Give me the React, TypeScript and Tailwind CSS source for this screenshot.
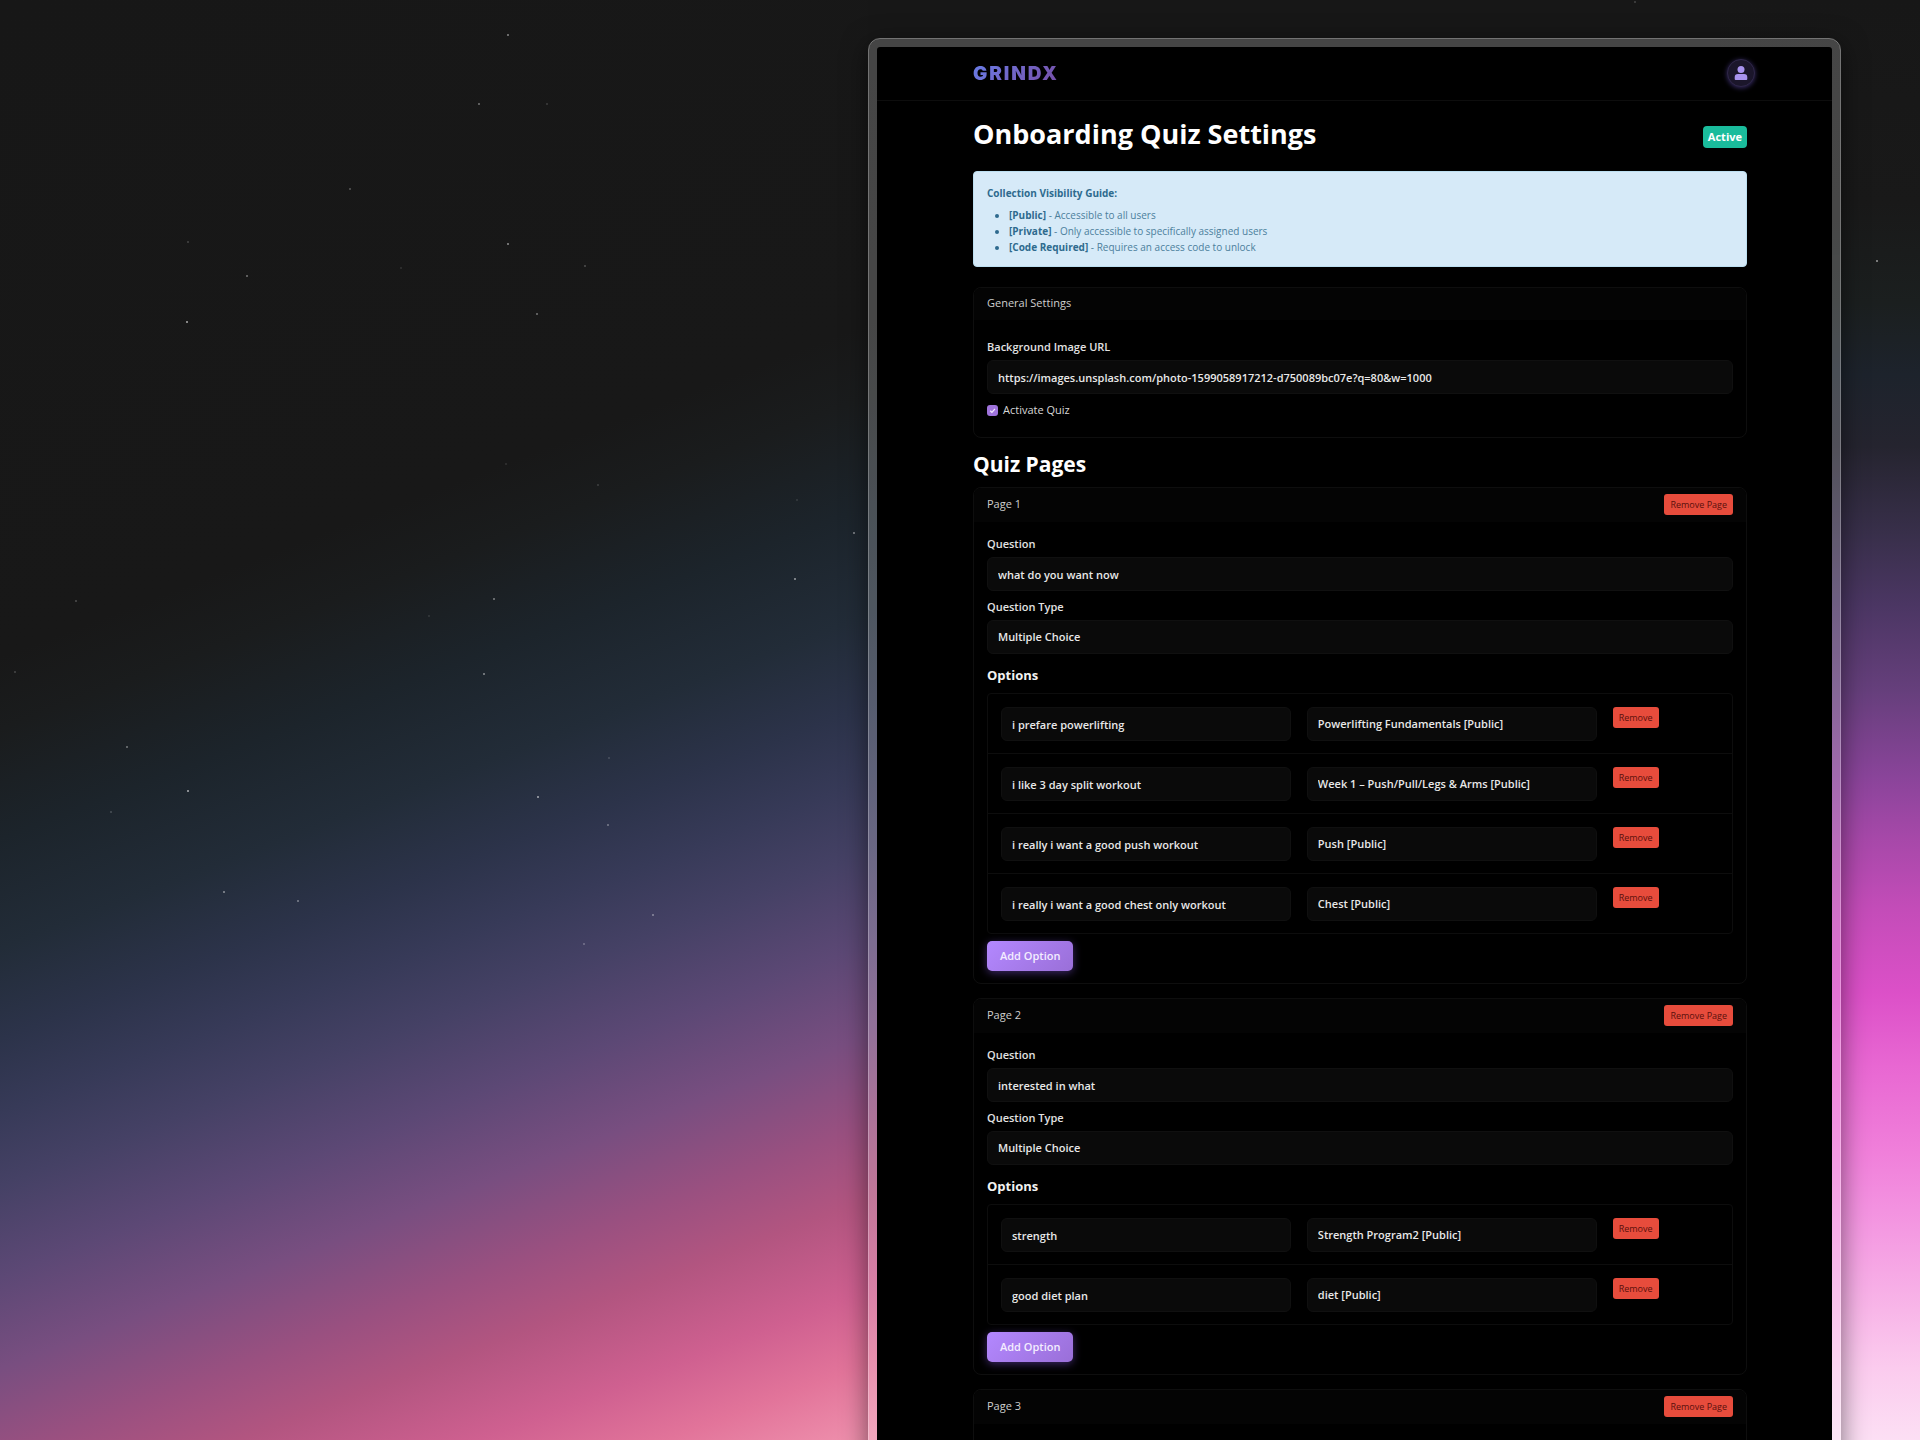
import React from "react";

type Option = { text: string; collection: string };
type QuizPage = { id: number; question: string; options: Option[] };

const pages: QuizPage[] = [
  {
    id: 1,
    question: "what do you want now",
    options: [
      { text: "i prefare powerlifting", collection: "Powerlifting Fundamentals [Public]" },
      { text: "i like 3 day split workout", collection: "Week 1 – Push/Pull/Legs & Arms [Public]" },
      { text: "i really i want a good push workout", collection: "Push [Public]" },
      { text: "i really i want a good chest only workout", collection: "Chest [Public]" },
    ],
  },
  {
    id: 2,
    question: "interested in what",
    options: [
      { text: "strength", collection: "Strength Program2 [Public]" },
      { text: "good diet plan", collection: "diet [Public]" },
    ],
  },
  { id: 3, question: "", options: [] },
];

const guide = [
  { tag: "[Public]", text: "Accessible to all users" },
  { tag: "[Private]", text: "Only accessible to specifically assigned users" },
  { tag: "[Code Required]", text: "Requires an access code to unlock" },
];

const stars: [number, number, number][] = [
  [507, 34, 0.6], [478, 103, 0.5], [546, 103, 0.2], [349, 188, 0.35], [187, 241, 0.25],
  [246, 275, 0.5], [507, 243, 0.65], [584, 265, 0.3], [400, 267, 0.15], [186, 321, 0.8],
  [536, 313, 0.5], [597, 484, 0.2], [505, 463, 0.15], [853, 532, 0.6], [794, 578, 0.7],
  [493, 598, 0.55], [428, 615, 0.15], [483, 673, 0.6], [75, 600, 0.3], [14, 671, 0.25],
  [126, 746, 0.5], [187, 790, 0.8], [110, 811, 0.25], [537, 796, 0.75], [608, 757, 0.2],
  [607, 824, 0.45], [223, 891, 0.6], [297, 900, 0.5], [652, 914, 0.5], [583, 943, 0.35],
  [1876, 260, 0.7], [1634, 1, 0.25], [796, 499, 0.15],
];

const fieldClass =
  "block h-[34px] w-full appearance-none rounded-md border border-[#101010] bg-[#0a0a0a] px-[10px] text-[11px] font-semibold text-[#e8e8e8] outline-none";

function Field({ label, id, children }: { label: string; id: string; children: React.ReactNode }) {
  return (
    <div className="flex flex-col gap-1">
      <label htmlFor={id} className="text-[11px] leading-[18px] font-semibold text-[#e2e2e2]">
        {label}
      </label>
      {children}
    </div>
  );
}

function DangerButton({ children }: { children: React.ReactNode }) {
  return (
    <button
      type="button"
      className="h-[21px] rounded-[3px] bg-[#e74c3c] px-[6px] text-[9px] leading-[21px] whitespace-nowrap text-[#5a100c]"
    >
      {children}
    </button>
  );
}

function OptionRow({ option, name }: { option: Option; name: string }) {
  return (
    <li className="grid grid-cols-12 items-start gap-4 px-[13px] pt-[13px] pb-3">
      <div className="col-span-5">
        <input aria-label="Option text" id={name + "-text"} defaultValue={option.text} className={fieldClass} />
      </div>
      <div className="col-span-5">
        <select aria-label="Collection" id={name + "-collection"} className={fieldClass}>
          <option>{option.collection}</option>
        </select>
      </div>
      <div className="col-span-2 flex">
        <DangerButton>Remove</DangerButton>
      </div>
    </li>
  );
}

function PageForm({ page }: { page: QuizPage }) {
  const key = "page-" + page.id;
  return (
    <>
      <div className="flex flex-col gap-[7px]">
        <Field label="Question" id={key + "-question"}>
          <input id={key + "-question"} defaultValue={page.question} className={fieldClass} />
        </Field>
        <Field label="Question Type" id={key + "-type"}>
          <select id={key + "-type"} className={fieldClass}>
            <option>Multiple Choice</option>
          </select>
        </Field>
      </div>
      <h4 className="mt-[11px] text-[13px] leading-5 font-bold text-[#f2f2f2]">Options</h4>
      <ul className="mt-2 divide-y divide-[#0d0d0d] rounded border border-[#0d0d0d]">
        {page.options.map((option, i) => (
          <OptionRow key={option.text} option={option} name={key + "-option-" + i} />
        ))}
      </ul>
      <button
        type="button"
        className="mt-[7px] h-[30px] rounded-[5px] bg-linear-135 from-[#b388ff] to-[#9a6fd8] px-[13px] text-[11px] font-semibold text-[#f4edff] shadow-[0_2px_8px_rgba(150,100,255,0.4)]"
      >
        Add Option
      </button>
    </>
  );
}

function PageCard({ page }: { page: QuizPage }) {
  return (
    <section className="overflow-hidden rounded-lg border border-[#0e0e0e]">
      <header className="flex items-start justify-between bg-[#040404] px-[13px] pt-[6px] pb-[7px]">
        <h3 className="text-[11px] leading-[19px] text-[#cfcfcf]">Page {page.id}</h3>
        <DangerButton>Remove Page</DangerButton>
      </header>
      <div className="min-h-24 px-[13px] pt-[13px] pb-3">{page.options.length > 0 && <PageForm page={page} />}</div>
    </section>
  );
}

export default function App() {
  return (
    <div className="relative h-screen overflow-hidden bg-[#171717] bg-[linear-gradient(180deg,#171717_0%,#191919_14%,#1b1f1f_21%,#1d232c_26%,#25242f_31%,#382f4a_37%,#4b3663_42%,#663f7c_48%,#8a449a_54%,#a548a8_58%,#c34cb8_63%,#dc50c8_69%,#e867d2_74%,#f07fda_80%,#f392e0_84%,#f8b6e8_91%,#fbcbee_95%,#fcdff4_100%),linear-gradient(159deg,#171717_0%,#181818_36%,#1a1c1d_40%,#1c242b_46%,#222c38_52%,#2c334a_57%,#373a58_61%,#454165_65%,#5c4875_70%,#784e80_75%,#9a5080_80%,#b25580_84%,#cf6090_89%,#e2749a_93%,#ee8fac_97%,#f09ab4_100%)] bg-[position:right_top,left_top] bg-[size:200px_100%,1000px_100%] bg-no-repeat pt-[38px] font-['Open_Sans','Noto_Sans',sans-serif]">
      <div className="absolute top-0 right-[200px] left-[868px] h-20 bg-[#171717]" />
      <svg aria-hidden="true" className="absolute inset-0 h-full w-full">
        {stars.map(([x, y, o]) => (
          <rect key={x + "-" + y} x={x} y={y} width="2" height="2" fill="#ffffff" opacity={o * 0.6} />
        ))}
      </svg>
      <div className="relative mr-[79px] ml-[868px] rounded-t-xl border border-white/40 shadow-[0_6px_26px_rgba(0,0,0,0.5)]">
        <div className="rounded-t-[11px] border-8 border-b-0 border-white/20">
          <div className="min-h-screen overflow-hidden rounded-t bg-black">
            <header className="flex h-[54px] items-center justify-between border-b border-[#0d0d0d] pr-[77px] pl-24">
              <a
                href="#home"
                className="bg-linear-135 from-[#667eea] to-[#764ba2] bg-clip-text pt-[2px] font-['Inter',sans-serif] text-[19px] font-black tracking-widest text-transparent"
              >
                GRINDX
              </a>
              <button
                type="button"
                aria-label="Account"
                className="mb-[2px] flex size-7 items-center justify-center rounded-full border border-[#2f2748] bg-[#1b162b] shadow-[0_1px_5px_rgba(140,110,255,0.4)]"
              >
                <svg viewBox="0 0 14 14" className="size-[14px] fill-[#a993ee]">
                  <circle cx="7" cy="3.500" r="3.500" />
                  <path d="M4 8h6a3.300 3.300 0 0 1 3.300 3.300V13a1 1 0 0 1-1 1H1.700a1 1 0 0 1-1-1v-1.700A3.300 3.300 0 0 1 4 8z" />
                </svg>
              </button>
            </header>
            <main className="pr-[85px] pl-24">
              <div className="flex items-center justify-between pt-3">
                <h1 className="text-[27px] leading-[42px] font-bold text-white">Onboarding Quiz Settings</h1>
                <span className="mt-[6px] rounded bg-[#1abc9c] px-[5px] text-[11px] leading-[22px] font-bold text-white">
                  Active
                </span>
              </div>
              <div className="mt-4 rounded border border-[#bcdff1] bg-[#d6eaf8] px-[13px] pt-[13px] pb-[11px] text-[10px] leading-4 text-[#4c7f9c]">
                <p className="font-bold text-[#2e6a8e]">Collection Visibility Guide:</p>
                <ul className="mt-[6px] list-disc pl-[22px] marker:text-[#2e6a8e]">
                  {guide.map((g) => (
                    <li key={g.tag}>
                      <strong className="font-bold text-[#2e6a8e]">{g.tag}</strong> - {g.text}
                    </li>
                  ))}
                </ul>
              </div>
              <section className="mt-5 overflow-hidden rounded-lg border border-[#0e0e0e]">
                <h2 className="bg-[#040404] px-[13px] pb-[2px] text-[11px] leading-[30px] text-[#cfcfcf]">
                  General Settings
                </h2>
                <div className="px-[13px] pt-[18px] pb-[18px]">
                  <Field label="Background Image URL" id="background-url">
                    <input
                      id="background-url"
                      defaultValue="https://images.unsplash.com/photo-1599058917212-d750089bc07e?q=80&w=1000"
                      className={fieldClass}
                    />
                  </Field>
                  <label className="mt-[7px] flex items-center gap-[5px] text-[11px] leading-[18px] text-[#d8d8d8]">
                    <span className="grid">
                      <input
                        type="checkbox"
                        defaultChecked
                        className="col-start-1 row-start-1 size-[11px] appearance-none rounded-[3px] bg-[#a074dd]"
                      />
                      <svg viewBox="0 0 11 11" className="pointer-events-none col-start-1 row-start-1 size-[11px]">
                        <path d="M3.200 5.700l1.700 1.600 3-3.300" fill="none" stroke="#f3eaff" strokeWidth="1.200" />
                      </svg>
                    </span>
                    Activate Quiz
                  </label>
                </div>
              </section>
              <h2 className="mt-[11px] mb-2 text-[21px] leading-[30px] font-bold text-white">Quiz Pages</h2>
              <div className="flex flex-col gap-[14px]">
                {pages.map((page) => (
                  <PageCard key={page.id} page={page} />
                ))}
              </div>
            </main>
          </div>
        </div>
      </div>
    </div>
  );
}
